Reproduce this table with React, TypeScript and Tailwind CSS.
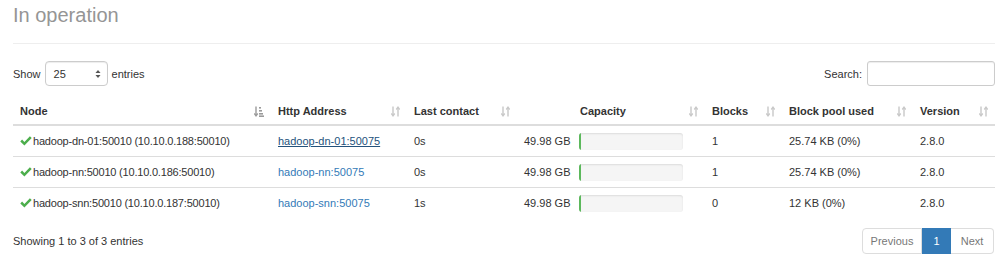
import React from "react";

const SortBoth = () => (
  <svg width="9" height="11" viewBox="0 0 9 11" className="shrink-0">
    <g stroke="#c8c8c8" strokeWidth="1.4" fill="none">
      <path d="M2 0.5 V9.5" />
      <path d="M0.3 7.5 L2 9.8 L3.7 7.5" />
      <path d="M7 10.5 V1.5" />
      <path d="M5.3 3.5 L7 1.2 L8.7 3.5" />
    </g>
  </svg>
);

const SortAsc = () => (
  <svg width="10" height="11" viewBox="0 0 10 11" className="shrink-0">
    <g stroke="#9a9a9a" strokeWidth="1.4" fill="none">
      <path d="M2 0.5 V9.5" />
      <path d="M0.3 7.5 L2 9.8 L3.7 7.5" />
    </g>
    <g fill="#9a9a9a">
      <rect x="5" y="1" width="2" height="1.6" />
      <rect x="5" y="4" width="3" height="1.6" />
      <rect x="5" y="7" width="4" height="1.6" />
      <rect x="5" y="9.4" width="5" height="1.6" />
    </g>
  </svg>
);

const Check = () => (
  <svg width="12" height="10" viewBox="0 0 12 10" className="shrink-0 mr-[1px]">
    <path d="M0.3 5.4 L2.1 3.6 L4.4 5.9 L9.9 0.3 L11.7 2.1 L4.4 9.4 Z" fill="#4cae4c" />
  </svg>
);

const rows = [
  { node: "hadoop-dn-01:50010 (10.10.0.188:50010)", http: "hadoop-dn-01:50075", hover: true, last: "0s", cap: "49.98 GB", blocks: "1", pool: "25.74 KB (0%)", ver: "2.8.0" },
  { node: "hadoop-nn:50010 (10.10.0.186:50010)", http: "hadoop-nn:50075", hover: false, last: "0s", cap: "49.98 GB", blocks: "1", pool: "25.74 KB (0%)", ver: "2.8.0" },
  { node: "hadoop-snn:50010 (10.10.0.187:50010)", http: "hadoop-snn:50075", hover: false, last: "1s", cap: "49.98 GB", blocks: "0", pool: "12 KB (0%)", ver: "2.8.0" },
];

const headers: { label: string; w: string; asc?: boolean; pl?: string }[] = [
  { label: "Node", w: "w-[258px]", asc: true },
  { label: "Http Address", w: "w-[136px]" },
  { label: "Last contact", w: "w-[110px]" },
  { label: "Capacity", w: "w-[188px]", pl: "pl-[56px]" },
  { label: "Blocks", w: "w-[77px]" },
  { label: "Block pool used", w: "w-[131px]" },
  { label: "Version", w: "w-[82px]" },
];

const td = "px-[7px] py-[6.5px] border-t border-[#ddd]";

export default function App() {
  return (
    <div
      className="w-[1000px] h-[265px] bg-white text-[#333] text-[11px] leading-[16px] overflow-hidden pl-[13px] pr-[5px]"
      style={{ fontFamily: '"Liberation Sans", Arial, Helvetica, sans-serif' }}
    >
      <div className="pt-[3px] pb-[16px] border-b border-[#eee]">
        <h3 className="text-[20px] leading-[24px] text-[#959595] font-normal">In operation</h3>
      </div>

      <div className="flex items-center justify-between mt-[17px]">
        <div className="flex items-center gap-[4px]">
          <span>Show</span>
          <div className="relative w-[63px] h-[25px] border border-[#ccc] rounded-[4px] flex items-center pl-[8px] shadow-[inset_0_1px_1px_rgba(0,0,0,0.075)]">
            <span>25</span>
            <svg width="6" height="10" viewBox="0 0 6 10" className="absolute right-[6px] top-[7px]">
              <path d="M0.5 4 L3 1 L5.5 4 Z" fill="#555" />
              <path d="M0.5 6 L3 9 L5.5 6 Z" fill="#555" />
            </svg>
          </div>
          <span>entries</span>
        </div>
        <div className="flex items-center gap-[5px]">
          <span>Search:</span>
          <div className="w-[128px] h-[25px] border border-[#ccc] rounded-[3px] shadow-[inset_0_1px_1px_rgba(0,0,0,0.075)]" />
        </div>
      </div>

      <table className="table-fixed border-collapse w-[982px] mt-[11px]">
        <thead>
          <tr>
            {headers.map((h) => (
              <th key={h.label} className={`${h.w} text-left font-bold px-[7px] pt-[6px] pb-[5px] border-b-2 border-[#ddd]`}>
                <div className="flex items-center justify-between">
                  <span className={h.pl ?? ""}>{h.label}</span>
                  {h.asc ? <SortAsc /> : <SortBoth />}
                </div>
              </th>
            ))}
          </tr>
        </thead>
        <tbody>
          {rows.map((r) => (
            <tr key={r.node}>
              <td className={td}>
                <div className="flex items-center whitespace-nowrap">
                  <Check />
                  <span className="tracking-[-0.2px]">{r.node}</span>
                </div>
              </td>
              <td className={td}>
                <span className={r.hover ? "text-[#23527c] underline" : "text-[#337ab7]"}>{r.http}</span>
              </td>
              <td className={td}>{r.last}</td>
              <td className={td}>
                <div className="flex items-center">
                  <div className="w-[46px] text-right whitespace-nowrap">{r.cap}</div>
                  <div className="ml-[9px] w-[104px] h-[17px] rounded-[3px] bg-[#f5f5f5] shadow-[inset_0_1px_2px_rgba(0,0,0,0.1)] overflow-hidden">
                    <div className="h-full w-[2px] bg-[#5cb85c]" />
                  </div>
                </div>
              </td>
              <td className={td}>{r.blocks}</td>
              <td className={`${td} whitespace-nowrap`}>{r.pool}</td>
              <td className={td}>{r.ver}</td>
            </tr>
          ))}
        </tbody>
      </table>

      <div className="flex items-center justify-between mt-[10px] w-[982px]">
        <span>Showing 1 to 3 of 3 entries</span>
        <div className="flex h-[26px] mr-[1px]">
          <div className="w-[60px] flex items-center justify-center border border-[#ddd] rounded-l-[4px] text-[#777]">Previous</div>
          <div className="w-[29px] flex items-center justify-center bg-[#337ab7] border border-[#337ab7] text-white">1</div>
          <div className="w-[43px] flex items-center justify-center border border-[#ddd] border-l-0 rounded-r-[4px] text-[#777]">Next</div>
        </div>
      </div>
    </div>
  );
}
